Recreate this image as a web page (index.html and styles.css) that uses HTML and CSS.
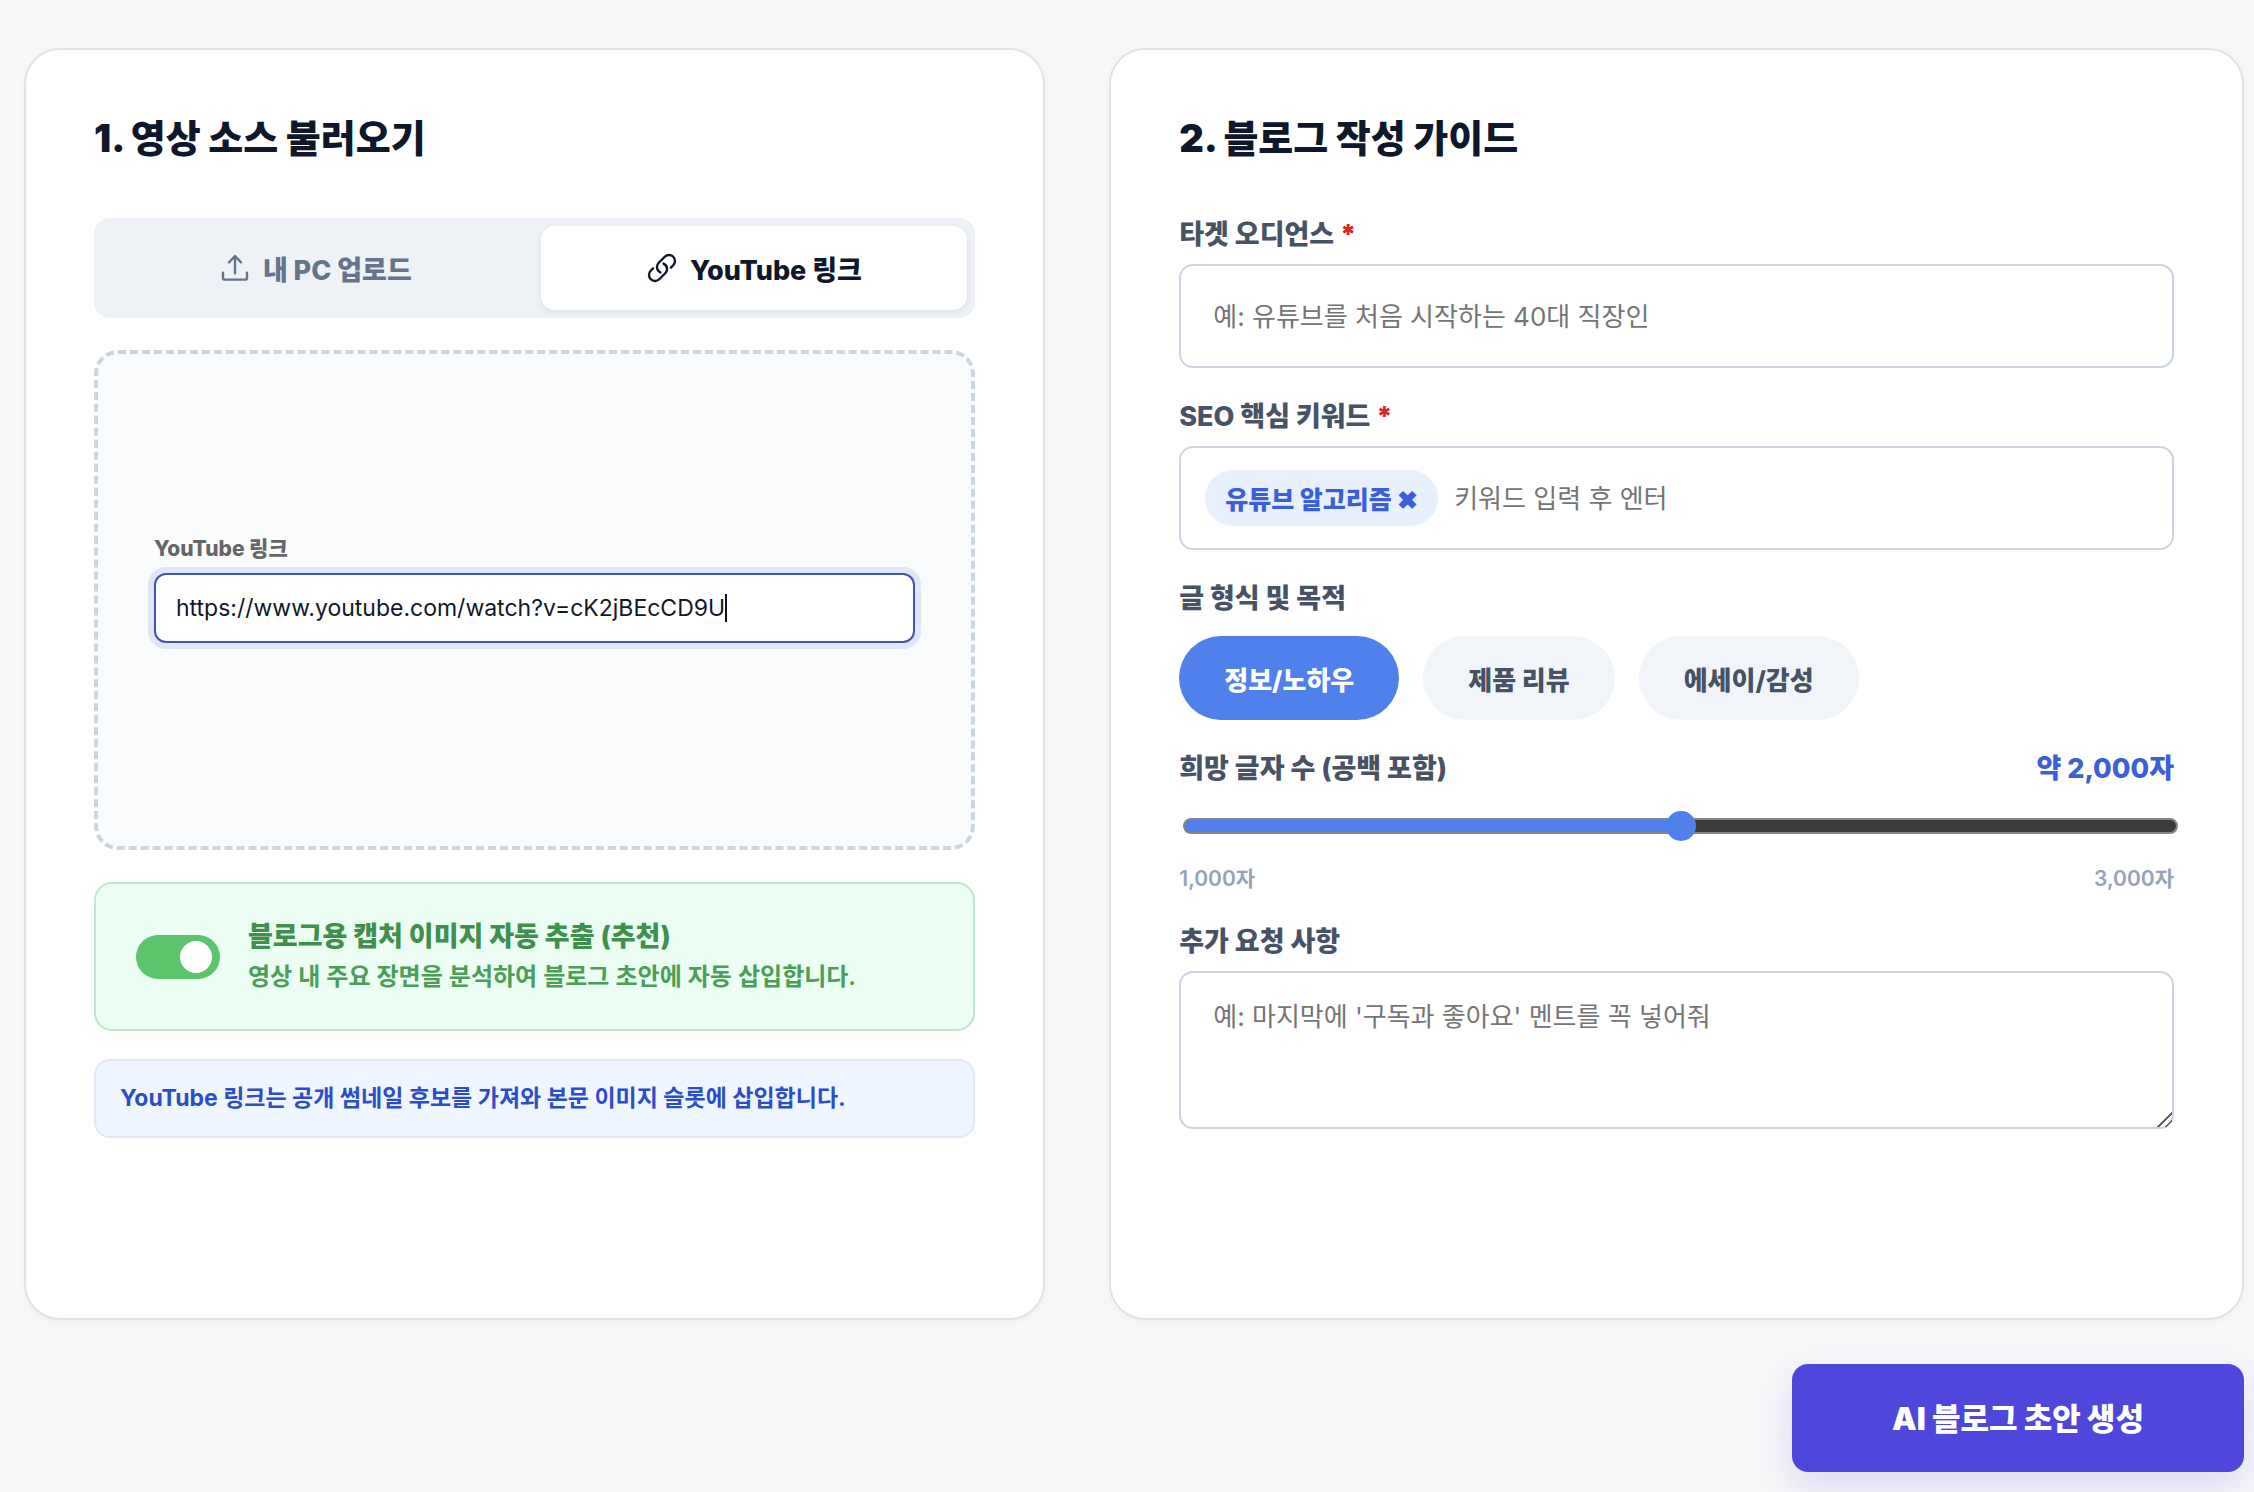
FILE: index.html
```html
<!DOCTYPE html>
<html lang="ko">
<head>
    <meta charset="UTF-8">
    <meta name="viewport" content="width=device-width, initial-scale=1.0">
    <title>AI 블로그 초안 생성</title>
    <link rel="stylesheet" href="styles.css">
</head>
<body>
    <form class="page" id="blog-form">
        <div class="panels">
            <section class="card">
                <h2>1. 영상 소스 불러오기</h2>

                <div class="tabs">
                    <button type="button" class="tab">
                        <svg class="icon" viewBox="0 0 24 24" aria-hidden="true">
                            <path d="M3 15.5v3.75A1.5 1.5 0 0 0 4.5 20.75h15a1.5 1.5 0 0 0 1.5-1.5V15.5M7.5 7.75 12 3l4.5 4.75M12 3v13" />
                        </svg>
                        내 PC 업로드
                    </button>
                    <button type="button" class="tab active">
                        <svg class="icon" viewBox="0 0 24 24" aria-hidden="true">
                            <path d="M13.19 8.688a4.5 4.5 0 0 1 1.242 7.244l-4.5 4.5a4.5 4.5 0 0 1-6.364-6.364l1.757-1.757m13.35-.622 1.757-1.757a4.5 4.5 0 0 0-6.364-6.364l-4.5 4.5a4.5 4.5 0 0 0 1.242 7.244" />
                        </svg>
                        YouTube 링크
                    </button>
                </div>

                <div class="source-box">
                    <label for="youtube_url">YouTube 링크</label>
                    <div class="url-field">
                        <input type="text" id="youtube_url" name="youtube_url" value="https://www.youtube.com/watch?v=cK2jBEcCD9U">
                        <span class="caret"></span>
                    </div>
                </div>

                <div class="capture-option">
                    <input type="checkbox" class="switch" id="auto_capture" name="auto_capture" checked>
                    <label for="auto_capture">
                        <strong>블로그용 캡처 이미지 자동 추출 (추천)</strong>
                        <span>영상 내 주요 장면을 분석하여 블로그 초안에 자동 삽입합니다.</span>
                    </label>
                </div>

                <p class="notice">YouTube 링크는 공개 썸네일 후보를 가져와 본문 이미지 슬롯에 삽입합니다.</p>
            </section>

            <section class="card">
                <h2>2. 블로그 작성 가이드</h2>

                <div class="field">
                    <label for="target">타겟 오디언스 <span class="required">*</span></label>
                    <input type="text" class="text-input" id="target" name="target" placeholder="예: 유튜브를 처음 시작하는 40대 직장인">
                </div>

                <div class="field">
                    <label for="keyword">SEO 핵심 키워드 <span class="required">*</span></label>
                    <div class="keyword-box">
                        <button type="button" class="chip">유튜브 알고리즘 <span>✖</span></button>
                        <input type="text" id="keyword" name="keyword" placeholder="키워드 입력 후 엔터">
                    </div>
                </div>

                <div class="field type-field">
                    <span class="field-title">글 형식 및 목적</span>
                    <div class="pills">
                        <button type="button" class="pill active">정보/노하우</button>
                        <button type="button" class="pill">제품 리뷰</button>
                        <button type="button" class="pill">에세이/감성</button>
                    </div>
                </div>

                <div class="field length-field">
                    <div class="length-head">
                        <label for="length">희망 글자 수 (공백 포함)</label>
                        <output for="length" class="length-value">약 2,000자</output>
                    </div>
                    <input type="range" id="length" name="length" min="1000" max="3000" value="2000">
                    <div class="length-scale">
                        <span>1,000자</span>
                        <span>3,000자</span>
                    </div>
                </div>

                <div class="field">
                    <label for="extra">추가 요청 사항</label>
                    <textarea id="extra" name="extra" placeholder="예: 마지막에 '구독과 좋아요' 멘트를 꼭 넣어줘"></textarea>
                </div>
            </section>
        </div>

        <button type="submit" class="submit-btn">AI 블로그 초안 생성</button>
    </form>
</body>
</html>
```

FILE: styles.css
```css
* {
    box-sizing: border-box;
}

body {
    margin: 0;
    background: #f7f7f8;
    color: #0f172a;
    font-family: Inter, "Noto Sans CJK KR", sans-serif;
}

h2, p {
    margin: 0;
}

button, input, textarea {
    margin: 0;
    font-family: inherit;
}

button {
    border: none;
    cursor: pointer;
}

input, textarea {
    color: #111827;
}

input::placeholder,
textarea::placeholder {
    color: #757575;
    opacity: 1;
}

.page {
    display: flex;
    flex-direction: column;
    gap: 44px;
    padding: 48px 10px 20px 24px;
}

.panels {
    display: grid;
    grid-template-columns: 9fr 10fr;
    gap: 64px;
}

.card {
    display: flex;
    flex-direction: column;
    min-height: 1272px;
    padding: 60px 68px;
    background: #fff;
    border: 2px solid #dde5ec;
    border-radius: 36px;
    box-shadow: 0 2px 6px rgba(15, 23, 42, 0.03);
}

.card h2 {
    margin-bottom: 52px;
    font-size: 38px;
    line-height: 56px;
    font-weight: 900;
}

/* source tabs */
.tabs {
    display: grid;
    grid-template-columns: 1fr 1fr;
    gap: 12px;
    padding: 8px;
    margin-bottom: 32px;
    background: #eef2f7;
    border-radius: 16px;
}

.tab {
    display: flex;
    align-items: center;
    justify-content: center;
    gap: 12px;
    height: 84px;
    background: transparent;
    border-radius: 14px;
    color: #64748b;
    font-size: 27px;
    font-weight: 800;
}

.tab.active {
    background: #fff;
    color: #0f172a;
    box-shadow: 0 2px 6px rgba(15, 23, 42, 0.08);
}

.icon {
    width: 32px;
    height: 32px;
    fill: none;
    stroke: currentColor;
    stroke-width: 1.8;
    stroke-linecap: round;
    stroke-linejoin: round;
}

.source-box {
    display: flex;
    flex-direction: column;
    justify-content: center;
    gap: 10px;
    height: 500px;
    padding: 0 56px 22px;
    margin-bottom: 32px;
    background: #f9fbfd;
    border: 4px dashed #cbd5e1;
    border-radius: 24px;
}

.source-box label {
    color: #666;
    font-size: 21px;
    line-height: 28px;
    font-weight: 800;
}

.url-field {
    display: flex;
    align-items: center;
    height: 70px;
    padding: 0 20px;
    background: #fff;
    border: 2px solid #3f51b5;
    border-radius: 12px;
    box-shadow: 0 0 0 6px #e0e5f8;
}

.url-field input {
    field-sizing: content;
    padding: 0;
    background: none;
    border: none;
    outline: none;
    font-size: 23px;
}

.caret {
    width: 2px;
    height: 28px;
    background: #111;
}

/* capture toggle */
.capture-option {
    display: flex;
    align-items: center;
    gap: 28px;
    height: 149px;
    padding: 0 40px;
    margin-bottom: 28px;
    background: #ecfdf3;
    border: 2px solid #bfe8cd;
    border-radius: 18px;
}

.capture-option label {
    display: flex;
    flex-direction: column;
    color: #4a9e57;
    font-size: 24px;
    line-height: 40px;
    font-weight: 600;
}

.capture-option strong {
    color: #3f8f4d;
    font-size: 27px;
    font-weight: 800;
}

.switch {
    appearance: none;
    display: flex;
    justify-content: flex-end;
    flex-shrink: 0;
    width: 84px;
    height: 44px;
    padding: 6px 8px;
    background: #5cc46c;
    border-radius: 22px;
}

.switch::before {
    content: "";
    width: 32px;
    height: 32px;
    background: #fff;
    border-radius: 50%;
}

.notice {
    padding: 0 24px;
    background: #eff6ff;
    border: 2px solid #dfe9f8;
    border-radius: 16px;
    color: #2d4cc8;
    font-size: 23px;
    line-height: 75px;
    font-weight: 700;
}

/* guide form */
.field {
    display: flex;
    flex-direction: column;
    gap: 8px;
    margin-bottom: 28px;
}

.card h2 + .field {
    margin-top: -4px;
}

.field label,
.field-title {
    color: #475264;
    font-size: 27px;
    line-height: 42px;
    font-weight: 800;
}

.required {
    color: #dc2626;
    font-weight: 900;
}

.text-input,
.keyword-box,
.field textarea {
    width: 100%;
    background: #fff;
    border: 2px solid #cbd5e1;
    border-radius: 14px;
    font-size: 26px;
}

.text-input {
    height: 104px;
    padding: 0 32px;
}

.keyword-box {
    display: flex;
    align-items: center;
    gap: 16px;
    height: 104px;
    padding: 0 24px;
}

.keyword-box input {
    flex: 1;
    padding: 0;
    border: none;
    outline: none;
    font-size: 26px;
}

.chip {
    height: 56px;
    padding: 0 20px;
    background: #e9f0fd;
    border-radius: 28px;
    color: #3b5fdc;
    font-size: 25px;
    font-weight: 800;
}

.type-field {
    gap: 16px;
}

.pills {
    display: flex;
    gap: 24px;
}

.pill {
    height: 84px;
    padding: 0 45px;
    background: #f1f5f9;
    border-radius: 42px;
    color: #475264;
    font-size: 26px;
    font-weight: 800;
}

.pill.active {
    background: #4f80ec;
    color: #fff;
}

.length-head,
.length-scale {
    display: flex;
    justify-content: space-between;
}

.length-value {
    color: #3b5fdc;
    font-size: 27px;
    line-height: 42px;
    font-weight: 800;
}

.length-field input {
    appearance: none;
    width: 100%;
    height: 16px;
    margin: 20px 4px 23px;
    background: linear-gradient(to right, #4f80ec 50%, #3b3b3b 50%);
    border: 2px solid #858585;
    border-radius: 8px;
}

.length-field input::-webkit-slider-thumb {
    appearance: none;
    width: 30px;
    height: 30px;
    background: #4f80ec;
    border-radius: 50%;
}

.length-scale {
    color: #94a3b8;
    font-size: 21px;
    line-height: 28px;
    font-weight: 600;
}

.field textarea {
    height: 158px;
    padding: 24px 32px;
    line-height: 40px;
}

/* two diagonal grip lines */
.field textarea::-webkit-resizer {
    background: linear-gradient(135deg, transparent 49%, #666 49% 57%, transparent 57% 75%, #666 75% 83%, transparent 83%);
}

.submit-btn {
    align-self: flex-end;
    width: 452px;
    height: 108px;
    padding-bottom: 4px;
    background: #4f46dc;
    border-radius: 16px;
    box-shadow: 0 16px 40px rgba(79, 70, 220, 0.16);
    color: #fff;
    font-size: 31px;
    font-weight: 900;
}
```
